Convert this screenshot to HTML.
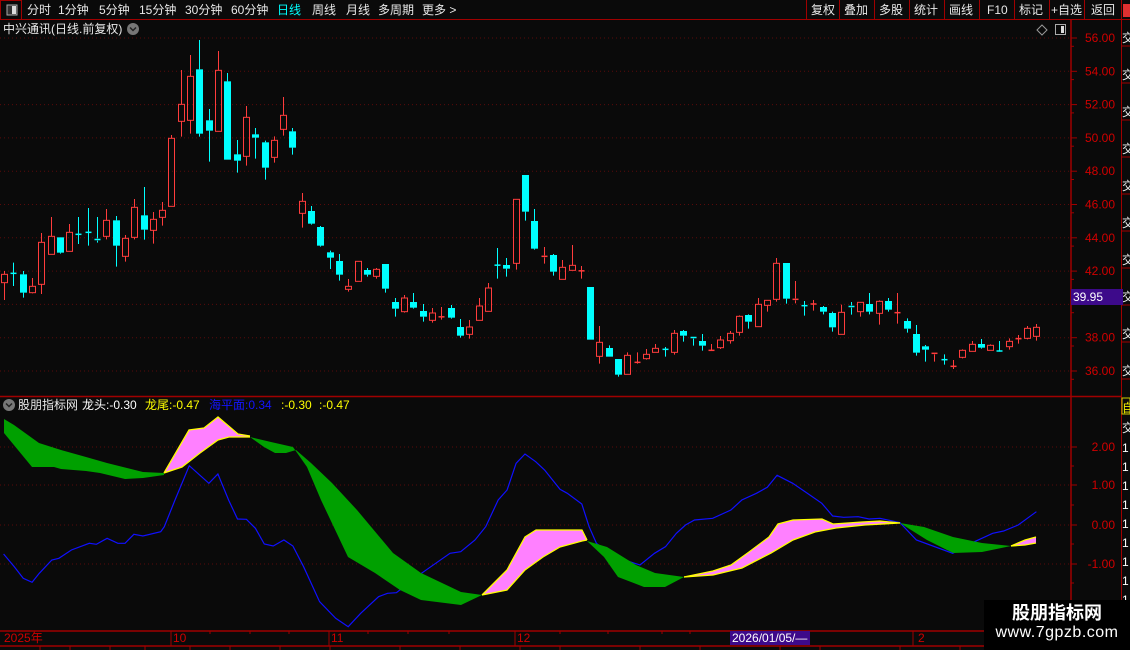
<!DOCTYPE html>
<html><head><meta charset="utf-8">
<style>
html,body{margin:0;padding:0;background:#0a0a0a;width:1130px;height:650px;overflow:hidden;font-family:"Liberation Sans","Noto Sans CJK SC",sans-serif;}
#w{position:relative;width:1130px;height:650px;}
.t{position:absolute;font-size:12px;line-height:14px;white-space:nowrap;color:#ddd;}
svg{position:absolute;left:0;top:0;}
</style></head><body><div id="w">
<svg id="s" width="1130" height="650" xmlns="http://www.w3.org/2000/svg"></svg>

<!-- toolbar text -->
<div class="t" style="left:27px;top:3px;color:#e8e8e8">分时</div>
<div class="t" style="left:58px;top:3px;color:#e8e8e8">1分钟</div>
<div class="t" style="left:99px;top:3px;color:#e8e8e8">5分钟</div>
<div class="t" style="left:139px;top:3px;color:#e8e8e8">15分钟</div>
<div class="t" style="left:185px;top:3px;color:#e8e8e8">30分钟</div>
<div class="t" style="left:231px;top:3px;color:#e8e8e8">60分钟</div>
<div class="t" style="left:277px;top:3px;color:#00ffff">日线</div>
<div class="t" style="left:312px;top:3px;color:#e8e8e8">周线</div>
<div class="t" style="left:346px;top:3px;color:#e8e8e8">月线</div>
<div class="t" style="left:378px;top:3px;color:#e8e8e8">多周期</div>
<div class="t" style="left:422px;top:3px;color:#e8e8e8">更多 &gt;</div>

<div class="t" style="left:811px;top:3px;color:#e8e8e8">复权</div>
<div class="t" style="left:844px;top:3px;color:#e8e8e8">叠加</div>
<div class="t" style="left:879px;top:3px;color:#e8e8e8">多股</div>
<div class="t" style="left:914px;top:3px;color:#e8e8e8">统计</div>
<div class="t" style="left:949px;top:3px;color:#e8e8e8">画线</div>
<div class="t" style="left:987px;top:3px;color:#e8e8e8">F10</div>
<div class="t" style="left:1019px;top:3px;color:#e8e8e8">标记</div>
<div class="t" style="left:1051px;top:3px;color:#e8e8e8">+自选</div>
<div class="t" style="left:1091px;top:3px;color:#e8e8e8">返回</div>

<div class="t" style="left:3px;top:22px;color:#e8e8e8">中兴通讯(日线.前复权)</div>

<div class="t" style="left:18px;top:398px;color:#e8e8e8">股朋指标网</div>
<div class="t" style="left:82px;top:398px;color:#fff">龙头:-0.30</div>
<div class="t" style="left:145px;top:398px;color:#ffff00">龙尾:-0.47</div>
<div class="t" style="left:209px;top:398px;color:#1414ff">海平面:0.34</div>
<div class="t" style="left:281px;top:398px;color:#ffff00">:-0.30</div>
<div class="t" style="left:319px;top:398px;color:#ffff00">:-0.47</div>

<div class="t" style="left:4px;top:631px;color:#d00000">2025年</div>
<div class="t" style="left:173px;top:631px;color:#d00000">10</div>
<div class="t" style="left:331px;top:631px;color:#d00000">11</div>
<div class="t" style="left:517px;top:631px;color:#d00000">12</div>
<div class="t" style="left:918px;top:631px;color:#d00000">2</div>
<div class="t" style="left:730px;top:631px;width:78px;height:14px;background:#3d0a8a;color:#fff;padding-left:2px">2026/01/05/—</div>

<div class="t" style="left:1071px;top:289px;width:50px;height:16px;line-height:16px;background:#3d0a8a;color:#fff;padding-left:2px">39.95</div>

<div style="position:absolute;left:984px;top:600px;width:146px;height:50px;background:#000"></div>
<div class="t" style="left:984px;top:602px;width:146px;text-align:center;font-size:18px;line-height:22px;font-weight:bold;color:#fff">股朋指标网</div>
<div class="t" style="left:984px;top:623px;width:146px;text-align:center;font-size:16px;line-height:20px;color:#fff;letter-spacing:0.5px">www.7gpzb.com</div>

<script>
var S=document.getElementById('s'),h='';
function L(x1,y1,x2,y2,c,w,d){h+='<line x1="'+x1+'" y1="'+y1+'" x2="'+x2+'" y2="'+y2+'" stroke="'+c+'" stroke-width="'+(w||1)+'"'+(d?' stroke-dasharray="'+d+'"':'')+'/>';}
function R(x,y,w,hh,f,s){h+='<rect x="'+x+'" y="'+y+'" width="'+w+'" height="'+hh+'" fill="'+(f||'none')+'"'+(s?' stroke="'+s+'"':'')+'/>';}
function T(x,y,t,c,a){h+='<text x="'+x+'" y="'+y+'" fill="'+c+'" font-size="12" font-family="Liberation Sans" '+(a?'text-anchor="'+a+'"':'')+'>'+t+'</text>';}
var RED='#a00000';
// toolbar
L(0,19.5,1130,19.5,RED);
R(0.5,0.5,21,19,'none',RED);R(7,5,10,10,'#333','#aaa');R(12,6,4,8,'#ddd');
[806,839,874,909,944,979,1014,1049,1084,1121].forEach(function(x){L(x+.5,0,x+.5,19,RED);});
R(1123,4,7,13,'#e03030');
// title icons
h+='<circle cx="133" cy="29" r="6" fill="#777"/><path d="M130 27.5 L133 30.5 L136 27.5" stroke="#222" stroke-width="1.5" fill="none"/>';
h+='<path d="M1042 25 L1047 30 L1042 35 L1037 30 Z" fill="none" stroke="#999"/>';
R(1055.5,24.5,10,10,'none','#aaa');R(1061,26,3,7,'#ddd');
// axes
L(1071,20,1071,630,RED,1.5);L(1121.5,20,1121.5,650,RED);
L(0,396.5,1122,396.5,RED,1.5);
L(0,631,1122,631,RED,1.5);L(0,646,1130,646,RED,1.5);
[171,329,515,913].forEach(function(x){L(x,631,x,646,RED);});
[210,250,289,368,408,449,560,608,662,690,803].forEach(function(x){L(x,631,x,634,RED);});
[40,70,110,145,190,230,280,330,400,460,520,560,640,700,780,820,900,960,1020].forEach(function(x){L(x,646,x,650,RED);});
// price grid
for(var p=36;p<=56;p+=2){var y=38+(56-p)*16.65;L(0,y,1069,y,'#5a0a0a',1,'1 3');L(1071,y,1077,y,RED);if(p!=40)T(1115,y+4,p.toFixed(2),'#d00000','end');L(1071,y+8.3,1074,y+8.3,RED);}
[[447,'2.00'],[485,'1.00'],[525,'0.00'],[564,'-1.00']].forEach(function(a){L(0,a[0],1069,a[0],'#5a0a0a',1,'1 3');L(1071,a[0],1077,a[0],RED);T(1115,a[0]+4,a[1],'#d00000','end');});
[466,505,544,583].forEach(function(y){L(1071,y,1074,y,RED);});
// right strip
for(var y=30;y<390;y+=37){L(1122,y+16,1130,y+16,RED);T(1122,y+12,'交','#eee');}
R(1122,398,8,16,'none','#cc0');T(1122,412,'自','#ee0');T(1122,432,'交','#eee');
for(var y=452;y<630;y+=19)T(1122,y,'1','#fff');
// candles
var C=[];
function add(ox,oy,arr){arr.forEach(function(a){C.push([ox+a[0]/3,oy+a[1]/3,oy+a[2]/3,oy+a[3]/3,oy+a[4]/3,a[5]]);});}
add(0,40,[[13,703,728,693,780,'r'],[40,699,701,668,738,'c'],[70,703,758,693,773,'c'],[97,739,758,714,760,'r'],[124,607,733,579,762,'r'],[154,589,643,531,643,'r'],[181,592,638,592,641,'c'],[208,577,634,552,634,'r'],[235,582,584,531,612,'c'],[265,576,578,504,617,'c'],[292,595,602,531,608,'c'],[319,541,589,507,598,'r'],[349,541,617,528,680,'c'],[376,595,649,585,665,'r'],[403,502,592,477,598,'r'],[433,526,569,441,599,'c'],[460,538,571,516,611,'r'],[487,511,532,486,557,'r'],[514,295,499,285,499,'r'],[544,193,244,90,290,'r'],[571,109,241,45,281,'r'],[598,88,281,0,290,'c'],[628,241,272,207,365,'c'],[655,91,274,33,274,'r'],[682,124,359,99,359,'c'],[712,343,362,300,398,'c'],[739,232,349,198,377,'r'],[766,283,293,264,356,'c'],[796,307,383,302,419,'c'],[823,301,352,289,368,'r'],[850,226,268,171,287,'r'],[877,274,323,264,344,'c']]);
add(300,160,[[7,124,160,99,203,'r'],[34,153,191,138,194,'c'],[61,201,257,198,260,'c'],[91,277,293,272,327,'c'],[118,303,344,282,362,'c'],[145,379,388,357,395,'r'],[175,304,364,304,364,'r'],[202,330,344,324,350,'c'],[229,328,349,324,356,'r'],[256,312,386,312,398,'c'],[286,426,446,414,470,'c'],[313,414,455,405,458,'r'],[340,426,443,399,446,'c'],[370,453,470,432,485,'c'],[397,459,481,444,488,'r'],[424,469,472,441,479,'r'],[454,444,473,435,476,'c'],[481,501,527,477,533,'c'],[508,501,523,480,536,'r'],[538,438,481,414,481,'r'],[565,384,454,369,454,'r'],[592,314,317,264,356,'c'],[619,315,326,294,350,'c'],[649,118,310,118,329,'r'],[676,45,155,45,182,'c'],[703,183,266,147,269,'c'],[733,286,292,261,311,'r'],[760,285,335,282,347,'c'],[787,322,358,300,358,'r'],[817,316,331,255,331,'r'],[844,331,334,318,356,'r'],[871,381,539,381,539,'c'],[898,547,589,498,611,'r'],[928,564,590,556,590,'c'],[955,597,644,597,650,'c'],[982,586,643,577,643,'r'],[1012,606,608,577,611,'r']]);
add(640,250,[[19,313,326,297,329,'r'],[46,295,307,282,307,'r'],[76,297,299,291,320,'c'],[103,250,307,240,314,'r'],[130,243,257,240,275,'c'],[160,259,266,259,287,'c'],[187,273,287,252,302,'c'],[214,300,302,282,302,'r'],[241,270,293,258,297,'r'],[271,250,272,243,281,'r'],[298,199,247,196,257,'r'],[325,195,215,193,236,'c'],[355,163,230,144,230,'r'],[382,151,166,151,185,'r'],[409,40,148,24,155,'r'],[439,39,146,39,161,'c'],[466,145,151,93,160,'r'],[493,166,168,153,197,'c'],[520,161,163,150,182,'r'],[550,171,185,168,193,'c'],[577,189,232,185,245,'c'],[604,187,253,164,253,'r'],[634,166,173,156,194,'c'],[661,157,185,157,200,'r'],[688,162,185,129,193,'c'],[718,154,190,151,224,'r'],[745,153,179,144,185,'c'],[772,187,189,129,221,'r'],[802,213,236,205,248,'c'],[829,252,308,225,317,'c'],[856,289,299,285,335,'c'],[883,307,313,307,335,'r'],[913,328,330,313,344,'c'],[940,348,350,330,357,'r'],[967,301,322,298,325,'r'],[997,283,304,273,304,'r'],[1024,282,293,267,296,'c'],[1051,286,301,283,301,'r'],[1078,302,304,273,305,'c'],[1108,274,290,265,299,'r'],[1135,265,267,255,281,'r'],[1162,235,265,228,268,'r'],[1189,232,259,222,272,'r']]);
C.forEach(function(c){var x=Math.round(c[0])+.5,col=c[5]=='r'?'#ff3c3c':'#00ffff';
 var bt=c[1],bb=c[2];
 L(x,c[3],x,bt,col);L(x,bb,x,c[4],col);
 if(bb-bt<2.5){L(x-3,(bt+bb)/2,x+3,(bt+bb)/2,col,1.5);}
 else if(c[5]=='r')R(x-3,bt,6,bb-bt,'none',col);
 else R(x-3.5,bt,7,bb-bt,col);
});
// blue line
var b9=[[10,462],[40,500],[65,535],[90,547],[110,520],[145,480],[165,475],[200,450],[250,430],[270,433],[300,415],[330,430],[350,430],[375,403],[400,408],[450,395],[460,380],[490,300],[530,197],[585,250],[610,222],[640,300],[665,357],[690,358],[715,385],[740,432],[765,438],[795,420],[820,438],[850,500],[895,605],[940,655],[975,680],[1010,640],[1060,590],[1085,580],[1110,578],[1180,520],[1260,460],[1290,455],[1330,420],[1360,380],[1395,300],[1420,270],[1445,190],[1470,162],[1500,185],[1525,210],[1568,268]];
var b10=[[20,280],[60,312],[80,380],[100,430],[150,470],[220,495],[260,460],[290,440],[320,400],[345,375],[370,360],[420,355],[470,330],[500,300],[540,280],[570,262],[597,226],[640,250],[680,280],[720,310],[750,348],[780,352],[820,350],[850,357],[880,355],[935,368],[980,420],[1080,460],[1140,425],[1190,400],[1220,393],[1260,375],[1310,335]];
var bp=b9.map(function(a){return (a[0]/2.8).toFixed(1)+','+(400+a[1]/3).toFixed(1);}).concat(b10.map(function(a){return (560+a[0]/2.75).toFixed(1)+','+(400+a[1]/3).toFixed(1);}));
h+='<polyline points="'+bp.join(' ')+'" fill="none" stroke="#1010ff" stroke-width="1.2"/>';
// bands
function band(top,bot,fill,edge){var pts=top.concat(bot.slice().reverse()).map(function(p){return p.join(',');}).join(' ');
 h+='<polygon points="'+pts+'" fill="'+fill+'"/>';
 if(edge){h+='<polyline points="'+top.map(function(p){return p.join(',')}).join(' ')+'" fill="none" stroke="'+edge+'" stroke-width="1.3"/>';h+='<polyline points="'+bot.map(function(p){return p.join(',')}).join(' ')+'" fill="none" stroke="'+edge+'" stroke-width="1.3"/>';}}
var G='#00a000',P='#ff80ff',Y='#ffff00';
band([[4,419],[14,425],[39,443],[61,450],[86,457],[107,463],[143,472],[164,473]],[[4,433],[32,467],[54,467],[61,469],[86,471],[100,473],[125,479],[143,478],[164,475]],G);
band([[164,473],[189,430],[204,428],[218,417],[238,434],[250,436]],[[164,473],[182,467],[200,453],[218,440],[229,437],[250,437]],P,Y);
band([[250,437],[264,447],[275,453],[286,453],[296,450],[311,463],[332,483],[357,510],[393,553],[421,573],[461,592],[482,595]],[[250,437],[271,442],[293,447],[307,467],[321,500],[348,557],[375,573],[400,590],[421,600],[461,605],[482,595]],G);
band([[482,595],[507,570],[525,537],[536,530],[560,530],[582,530],[587,540]],[[482,595],[507,590],[525,570],[543,557],[560,547],[582,541],[587,540]],P,Y);
band([[587,541],[604,557],[618,577],[644,587],[665,587],[684,577]],[[587,541],[607,547],[636,565],[655,573],[684,577]],G);
band([[684,577],[713,571],[731,565],[749,552],[769,537],[778,524],[793,520],[822,519],[833,524],[862,522],[880,521],[900,523]],[[684,577],[713,575],[742,568],[771,553],[793,540],[815,532],[836,528],[865,525],[900,523]],P,Y);
band([[900,523],[924,527],[953,537],[982,543],[1011,546]],[[900,523],[927,540],[953,553],[982,552],[1011,546]],G);
band([[1011,546],[1025,540],[1036,537]],[[1011,546],[1025,545],[1036,543]],P,Y);
// indicator header icon
h+='<circle cx="9" cy="405" r="6" fill="#777"/><path d="M6 403.5 L9 406.5 L12 403.5" stroke="#222" stroke-width="1.5" fill="none"/>';
S.innerHTML=h;
</script>
</div></body></html>
